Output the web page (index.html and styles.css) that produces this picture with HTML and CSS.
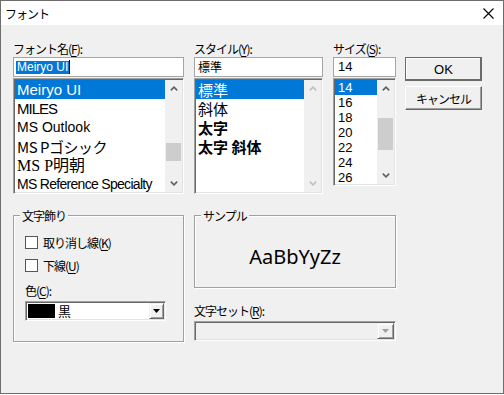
FILE: index.html
```html
<!DOCTYPE html>
<html lang="ja">
<head>
  <meta charset="UTF-8">
  <title>フォント</title>
  <link rel="stylesheet" href="styles.css">
</head>
<body>
  <div class="window">

    <!-- Title bar -->
    <div class="titlebar">
      <span class="title jp">フォント</span>
      <svg class="close" width="11" height="11" viewBox="0 0 11 11">
        <path d="M0.5 0.5L10.5 10.5M10.5 0.5L0.5 10.5" stroke="#000" stroke-width="1.1"/>
      </svg>
    </div>

    <div class="body">
      <!-- Top row: font / style / size lists and buttons -->
      <div class="top">
        <div class="col col-font">
          <div class="label jp">フォント名(<u>F</u>):</div>
          <div class="edit edit-font"><span class="sel">Meiryo UI</span><span class="caret"></span></div>
          <div class="list list-font">
            <div class="items">
              <div class="item selected f-meiryo">Meiryo UI</div>
              <div class="item f-miles">MILES</div>
              <div class="item f-outlook">MS Outlook</div>
              <div class="item f-gothic">MS Pゴシック</div>
              <div class="item f-mincho">MS P明朝</div>
              <div class="item f-ref">MS Reference Specialty</div>
            </div>
            <div class="scrollbar">
              <div class="arrow"><svg width="8" height="5" viewBox="0 0 8 5"><path d="M0.8 4.4L4 1.2L7.2 4.4" class="chev"/></svg></div>
              <div class="track"><div class="thumb thumb-font"></div></div>
              <div class="arrow"><svg width="8" height="5" viewBox="0 0 8 5"><path d="M0.8 0.6L4 3.8L7.2 0.6" class="chev"/></svg></div>
            </div>
          </div>
        </div>

        <div class="col col-style">
          <div class="label jp">スタイル(<u>Y</u>):</div>
          <div class="edit edit-style jp">標準</div>
          <div class="list list-style">
            <div class="items">
              <div class="item selected jp">標準</div>
              <div class="item jp">斜体</div>
              <div class="item jp bold">太字</div>
              <div class="item jp bold">太字 斜体</div>
            </div>
            <div class="scrollbar disabled">
              <div class="arrow"><svg width="8" height="5" viewBox="0 0 8 5"><path d="M0.8 4.4L4 1.2L7.2 4.4" class="chev"/></svg></div>
              <div class="track"></div>
              <div class="arrow"><svg width="8" height="5" viewBox="0 0 8 5"><path d="M0.8 0.6L4 3.8L7.2 0.6" class="chev"/></svg></div>
            </div>
          </div>
        </div>

        <div class="col col-size">
          <div class="label jp">サイズ(<u>S</u>):</div>
          <div class="edit edit-size">14</div>
          <div class="list list-size">
            <div class="items">
              <div class="item selected">14</div>
              <div class="item">16</div>
              <div class="item">18</div>
              <div class="item">20</div>
              <div class="item">22</div>
              <div class="item">24</div>
              <div class="item">26</div>
            </div>
            <div class="scrollbar">
              <div class="arrow"><svg width="8" height="5" viewBox="0 0 8 5"><path d="M0.8 4.4L4 1.2L7.2 4.4" class="chev"/></svg></div>
              <div class="track"><div class="thumb thumb-size"></div></div>
              <div class="arrow"><svg width="8" height="5" viewBox="0 0 8 5"><path d="M0.8 0.6L4 3.8L7.2 0.6" class="chev"/></svg></div>
            </div>
          </div>
        </div>

        <div class="buttons">
          <button class="btn btn-default">OK</button>
          <button class="btn jp">キャンセル</button>
        </div>
      </div>

      <!-- Bottom row: effects, sample, charset -->
      <div class="bottom">
        <fieldset class="group group-effects">
          <legend class="jp">文字飾り</legend>
          <div class="effects">
            <div class="check jp"><span class="box"></span>取り消し線(<u>K</u>)</div>
            <div class="check check-2 jp"><span class="box"></span>下線(<u>U</u>)</div>
            <div class="label label-color jp">色(<u>C</u>):</div>
            <div class="combo combo-color">
              <span class="swatch"></span>
              <span class="combo-text jp">黒</span>
              <span class="drop"><svg width="7" height="4" viewBox="0 0 7 4"><path d="M0 0H7L3.5 4Z" fill="#000"/></svg></span>
            </div>
          </div>
        </fieldset>

        <div class="col-right">
          <fieldset class="group group-sample">
            <legend class="jp">サンプル</legend>
            <div class="sample">AaBbYyZz</div>
          </fieldset>
          <div class="label label-charset jp">文字セット(<u>R</u>):</div>
          <div class="combo combo-charset">
            <span class="drop"><svg width="7" height="4" viewBox="0 0 7 4"><path d="M0 0H7L3.5 4Z" fill="#a0a0a0"/></svg></span>
          </div>
        </div>
      </div>
    </div>
  </div>
</body>
</html>
```

FILE: styles.css
```css
/* General Styles */
* {
  box-sizing: border-box;
}

body {
  margin: 0;
  font-family: "Liberation Sans", "Noto Sans CJK JP", sans-serif;
  font-size: 12px;
  color: #000;
}

.jp {
  font-family: "Noto Sans CJK JP", "Liberation Sans", sans-serif;
  letter-spacing: -1px;
}

u {
  text-decoration-thickness: 1px;
  text-underline-offset: 2px;
}

/* Window frame */
.window {
  width: 504px;
  height: 394px;
  border: 1px solid #6d6d6d;
  background-color: #f0f0f0;
  display: flex;
  flex-direction: column;
}

.titlebar {
  height: 24px;
  background-color: #fff;
  display: flex;
  align-items: center;
  justify-content: space-between;
  padding: 0 9px 0 4px;
}

.title {
  font-size: 12px;
  line-height: 15px;
}

.body {
  padding: 16px 0 0 12px;
}

/* Top row */
.top {
  display: flex;
}

.col-font {
  width: 171px;
  margin-right: 10px;
}

.col-style {
  width: 129px;
  margin-right: 10px;
}

.col-size {
  width: 63px;
  margin-right: 9px;
}

.label {
  height: 15px;
  line-height: 15px;
  margin-bottom: 1px;
  white-space: nowrap;
}

.edit {
  height: 20px;
  border: 1px solid #a5a5a5;
  background-color: #fff;
  line-height: 18px;
  padding-left: 2px;
  white-space: nowrap;
  display: flex;
  align-items: center;
}

.edit-font .sel {
  background-color: #0078d7;
  color: #fff;
  font-size: 12px;
  line-height: 13px;
  padding: 0 1px;
}

.caret {
  width: 1px;
  height: 14px;
  background-color: #000;
}

.edit-style {
  padding-left: 3px;
  font-size: 12px;
  letter-spacing: 0;
}

.edit-size {
  padding-left: 4px;
  font-size: 13px;
}

/* Sunken list boxes */
.list {
  margin-top: 1px;
  display: flex;
  background-color: #fff;
  padding: 1px;
  border: 1px solid;
  border-color: #a0a0a0 #fff #fff #a0a0a0;
  box-shadow: inset 1px 1px 0 #696969, inset -1px -1px 0 #e3e3e3;
}

.list-font,
.list-style {
  height: 116px;
}

.list-size {
  height: 108px;
}

.items {
  flex: 1;
  overflow: hidden;
  min-width: 0;
}

.item {
  height: 19px;
  line-height: 19px;
  padding-left: 2px;
  white-space: nowrap;
}

.item.selected {
  background-color: #0078d7;
  color: #fff;
}

.f-meiryo { font-size: 15px; }
.f-miles { font-size: 15px; letter-spacing: -1px; }
.f-outlook { font-size: 14px; }
.f-gothic { font-family: "Noto Sans CJK JP", sans-serif; font-size: 15px; letter-spacing: -0.5px; }
.f-mincho { font-family: "Liberation Serif", "Noto Sans CJK JP", serif; font-size: 16px; }
.f-ref { font-size: 14px; letter-spacing: -0.7px; }

.list-style .item {
  font-size: 15px;
  letter-spacing: 0;
}

.bold {
  font-weight: bold;
}

.list-size .item {
  height: 15px;
  line-height: 15px;
  font-size: 13px;
  padding-left: 3px;
}

/* Scrollbars */
.scrollbar {
  width: 17px;
  display: flex;
  flex-direction: column;
  background-color: #f0f0f0;
}

.arrow {
  height: 17px;
  display: flex;
  align-items: center;
  justify-content: center;
}

.chev {
  fill: none;
  stroke: #606060;
  stroke-width: 1.6;
}

.disabled .chev {
  stroke: #c0c0c0;
}

.track {
  flex: 1;
}

.thumb {
  margin: 0 1px;
  background-color: #cdcdcd;
}

.thumb-font {
  margin-top: 46px;
  height: 18px;
}

.thumb-size {
  margin-top: 21px;
  height: 32px;
}

/* Buttons */
.buttons {
  width: 77px;
  padding-top: 16px;
  display: flex;
  flex-direction: column;
}

.btn {
  height: 24px;
  margin: 0 0 5px;
  padding: 0;
  font-size: 12px;
  background-color: #f0f0f0;
  border: 1px solid;
  border-color: #fff #696969 #696969 #fff;
  box-shadow: inset -1px -1px 0 #a0a0a0;
  color: #000;
}

.btn-default {
  border-color: #6a6a6a;
  box-shadow: inset -1px -1px 0 #696969, inset 1px 1px 0 #fff;
  font-family: "Liberation Sans", sans-serif;
  font-size: 13px;
}

/* Bottom row */
.bottom {
  display: flex;
  margin-top: 14px;
}

.group {
  margin: 0;
  padding: 0;
  min-width: 0;
  border: 1px solid #a0a0a0;
  box-shadow: 1px 1px 0 #fff, inset 1px 1px 0 #fff;
}

.group legend {
  margin-left: 6px;
  padding: 0 2px;
  line-height: 15px;
  background-color: #f0f0f0;
}

.group-effects {
  width: 171px;
  height: 134px;
  margin-right: 10px;
}

.effects {
  padding-left: 11px;
}

.check {
  height: 15px;
  line-height: 15px;
  margin-top: 12px;
  display: flex;
  align-items: center;
  white-space: nowrap;
}

.check-2 {
  margin-top: 8px;
}

.box {
  width: 13px;
  height: 13px;
  border: 1px solid #555;
  background-color: #fff;
  margin-right: 5px;
}

.label-color {
  margin-top: 10px;
  margin-bottom: 3px;
}

/* Combo boxes */
.combo {
  height: 20px;
  display: flex;
  align-items: stretch;
  padding: 1px;
  border: 1px solid;
  border-color: #a0a0a0 #fff #fff #a0a0a0;
  box-shadow: inset 1px 1px 0 #696969, inset -1px -1px 0 #e3e3e3;
}

.combo-color {
  width: 141px;
  background-color: #fff;
}

.swatch {
  width: 27px;
  margin: 1px 3px 1px 1px;
  background-color: #000;
}

.combo-text {
  flex: 1;
  line-height: 16px;
  font-size: 13px;
}

.drop {
  width: 15px;
  margin-left: auto;
  display: flex;
  align-items: center;
  justify-content: center;
  background-color: #f0f0f0;
  border: 1px solid;
  border-color: #f0f0f0 #696969 #696969 #f0f0f0;
  box-shadow: inset 1px 1px 0 #fff, inset -1px -1px 0 #a0a0a0;
}

.col-right {
  width: 202px;
}

.group-sample {
  height: 80px;
}

.sample {
  height: 62px;
  display: flex;
  align-items: center;
  justify-content: center;
  padding-top: 5px;
  font-family: "Noto Sans", sans-serif;
  font-size: 20px;
  line-height: 24px;
}

.label-charset {
  margin-top: 15px;
  margin-bottom: 3px;
}

.combo-charset {
  width: 202px;
  background-color: #f0f0f0;
}

.combo-charset .drop {
  width: 17px;
}
```
